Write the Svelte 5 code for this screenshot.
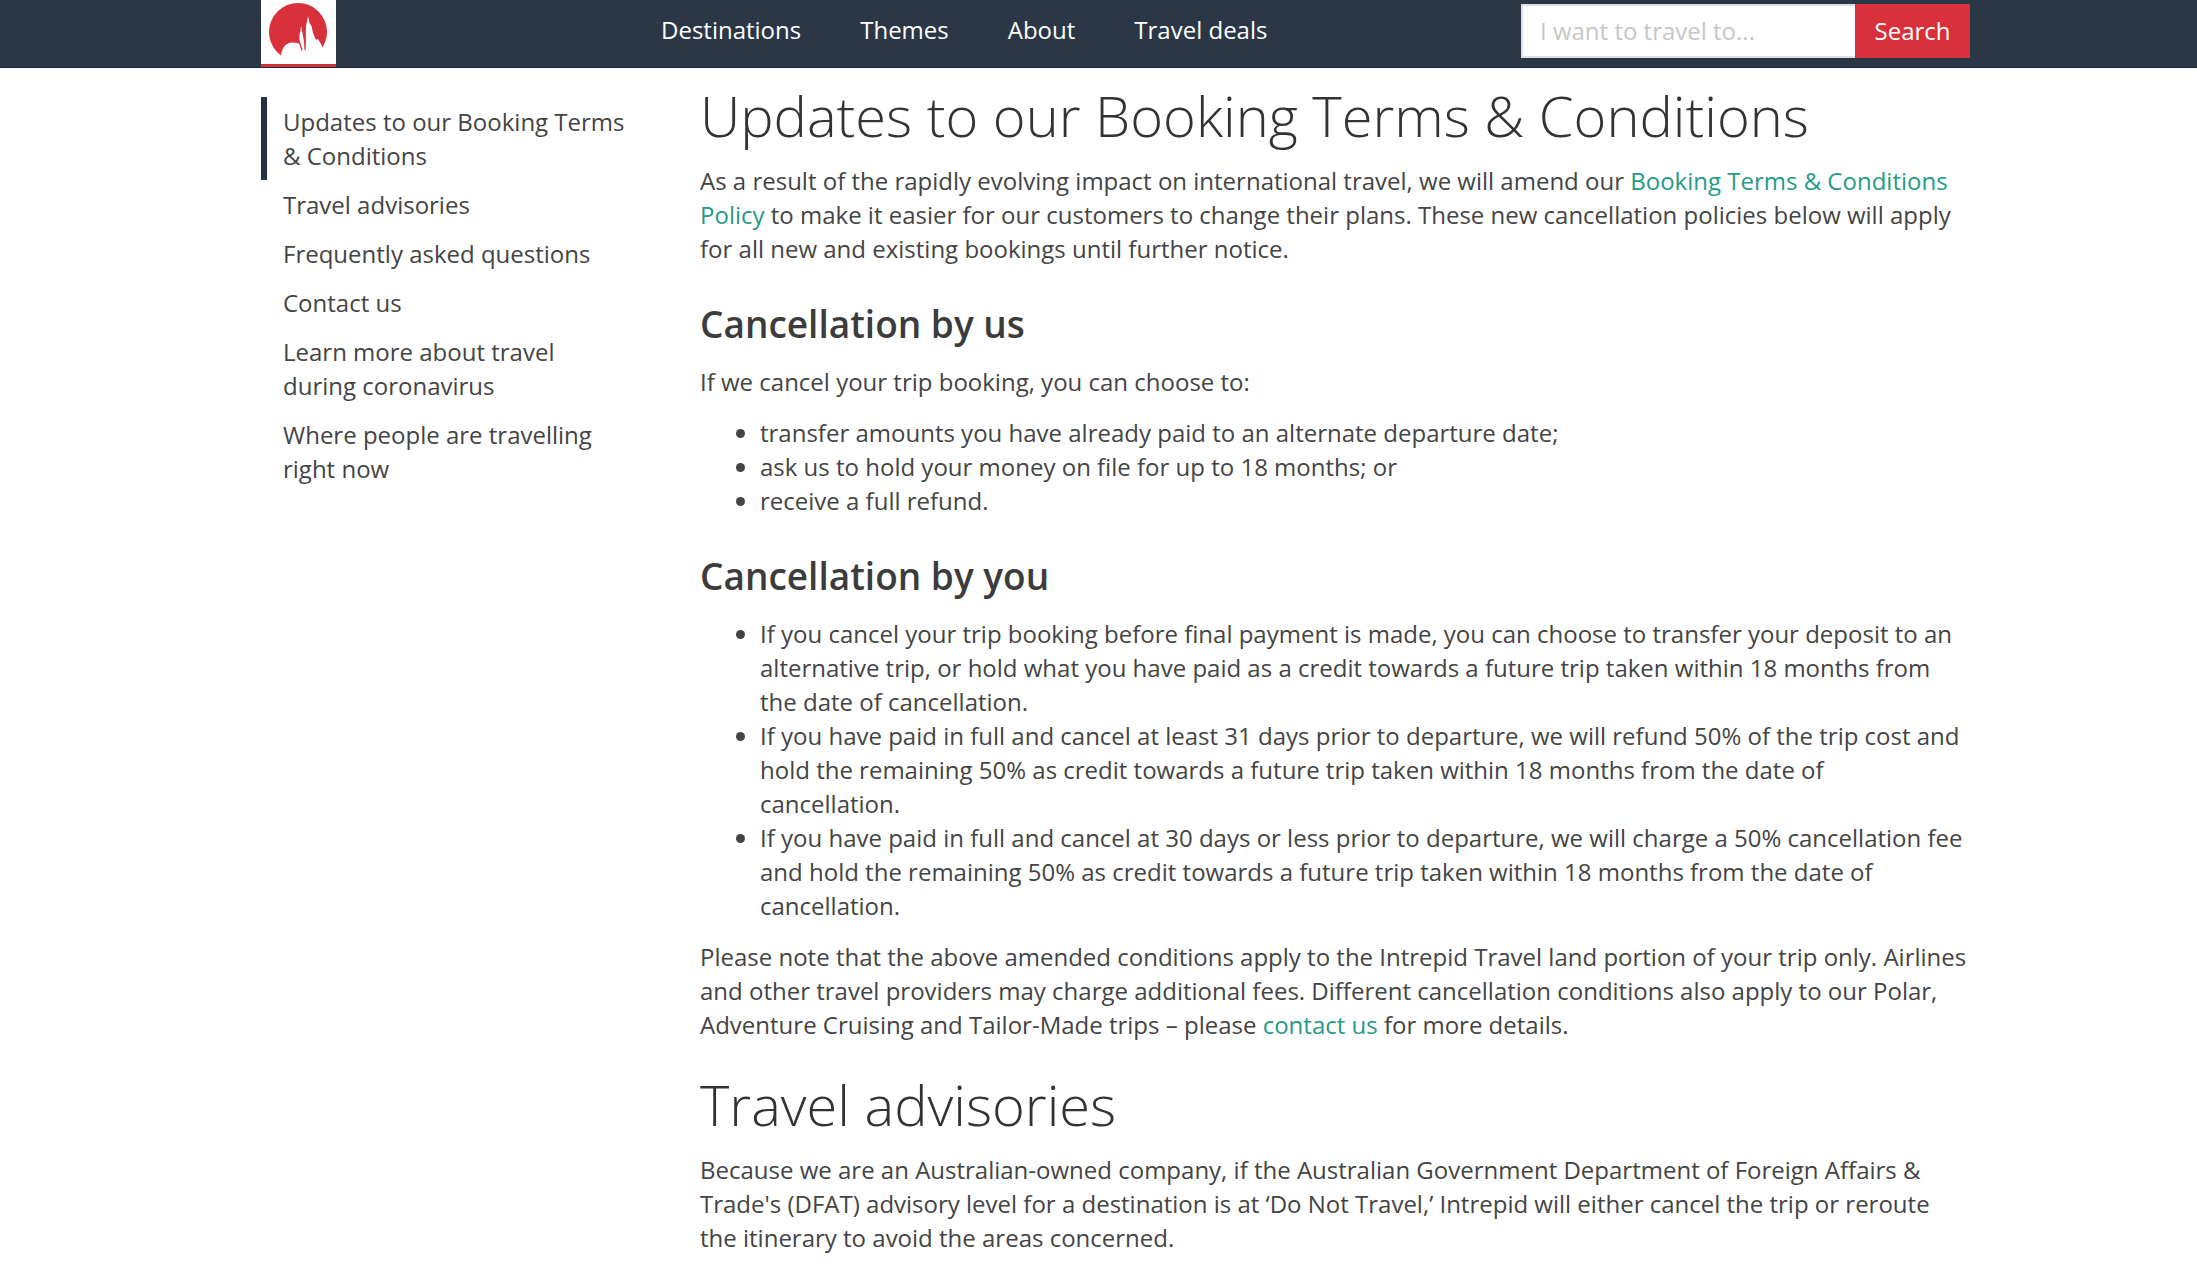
<script>
  const nav = ['Destinations', 'Themes', 'About', 'Travel deals'];
  const sections = [
    'Updates to our Booking Terms & Conditions',
    'Travel advisories',
    'Frequently asked questions',
    'Contact us',
    'Learn more about travel during coronavirus',
    'Where people are travelling right now'
  ];
  let active = $state(0);
  let query = $state('');
</script>

<header>
  <a class="logo" href="#home" aria-label="Home">
    <svg viewBox="0 0 75 64" aria-hidden="true">
      <path
        fill="#d9313b"
        d="M20 55.5 A29 29 0 1 1 61.5 47.5 L60 44 L57 39 L55 40 L52 33 L50.5 26 L48.5 23 L47 16 L46 22 L45 25 L44.7 50 L43.5 50 L42.8 40 L41.5 33 L40 26 L39.5 31 L38.5 34 L38.5 40 L41.5 50 L40.5 51 L38 43.5 Q31 41.5 26 44 Q21 47 20 55.5 Z"
      />
    </svg>
  </a>
  <nav aria-label="Main">
    {#each nav as label}
      <a href="#{label}">{label}</a>
    {/each}
  </nav>
  <form role="search" onsubmit={(e) => e.preventDefault()}>
    <input type="text" aria-label="Destination" placeholder="I want to travel to..." bind:value={query} />
    <button type="submit">Search</button>
  </form>
</header>

<div class="page">
  <aside>
    {#each sections as label, i}
      <a href="#section-{i}" class:active={active === i} onclick={() => (active = i)}>{label}</a>
    {/each}
  </aside>

  <main>
    <h1 id="section-0">Updates to our Booking Terms &amp; Conditions</h1>
    <p>
      As a result of the rapidly evolving impact on international travel, we will amend our
      <a href="#policy">Booking Terms &amp; Conditions Policy</a> to make it easier for our customers to change
      their plans. These new cancellation policies below will apply for all new and existing bookings until
      further notice.
    </p>

    <h2>Cancellation by us</h2>
    <p>If we cancel your trip booking, you can choose to:</p>
    <ul>
      <li>transfer amounts you have already paid to an alternate departure date;</li>
      <li>ask us to hold your money on file for up to 18 months; or</li>
      <li>receive a full refund.</li>
    </ul>

    <h2>Cancellation by you</h2>
    <ul>
      <li>
        If you cancel your trip booking before final payment is made, you can choose to transfer your deposit
        to an alternative trip, or hold what you have paid as a credit towards a future trip taken within 18
        months from the date of cancellation.
      </li>
      <li>
        If you have paid in full and cancel at least 31 days prior to departure, we will refund 50% of the
        trip cost and hold the remaining 50% as credit towards a future trip taken within 18 months from the
        date of cancellation.
      </li>
      <li>
        If you have paid in full and cancel at 30 days or less prior to departure, we will charge a 50%
        cancellation fee and hold the remaining 50% as credit towards a future trip taken within 18 months
        from the date of cancellation.
      </li>
    </ul>
    <p>
      Please note that the above amended conditions apply to the Intrepid Travel land portion of your trip
      only. Airlines and other travel providers may charge additional fees. Different cancellation conditions
      also apply to our Polar, Adventure Cruising and Tailor-Made trips – please
      <a href="#contact">contact us</a> for more details.
    </p>

    <h1 id="section-1">Travel advisories</h1>
    <p>
      Because we are an Australian-owned company, if the Australian Government Department of Foreign Affairs
      &amp; Trade's (DFAT) advisory level for a destination is at ‘Do Not Travel,’ Intrepid will either cancel
      the trip or reroute the itinerary to avoid the areas concerned.
    </p>
  </main>
</div>

<style>
  :global(body) {
    margin: 0;
    background: #fff;
    color: #444;
    font: 24px/34px 'Open Sans', 'Noto Sans', sans-serif;
  }
  header,
  .page {
    display: grid;
    grid-template-columns: 372px 1fr;
    padding: 0 227px 0 261px;
  }
  header {
    grid-template-columns: 400px 1fr auto;
    height: 68px;
    box-sizing: border-box;
    background: #2b3746;
    border-bottom: 1px solid #1f2a36;
  }
  .logo {
    width: 75px;
    height: 64px;
    background: #fff;
    border-bottom: 3px solid #d0313c;
  }
  .logo svg {
    display: block;
  }
  nav {
    display: flex;
    gap: 59px;
    padding-top: 13px;
  }
  nav a {
    color: #fff;
    text-decoration: none;
    white-space: nowrap;
  }
  form {
    display: flex;
    height: 54px;
    margin-top: 4px;
  }
  input,
  button {
    box-sizing: border-box;
    font: inherit;
    border: 0;
    border-radius: 0;
  }
  input {
    width: 334px;
    padding: 0 17px;
    border: 2px solid #dcdfe3;
    border-right-width: 0;
    background: #fff;
    color: #444;
  }
  input::placeholder {
    color: #c6c6c6;
    opacity: 1;
  }
  button {
    width: 115px;
    padding: 0;
    background: #d9313b;
    color: #fff;
    font-weight: 500;
  }
  aside {
    padding-top: 29px;
  }
  aside a {
    display: block;
    padding: 8px 0 7px 16px;
    border-left: 6px solid transparent;
    color: #444;
    text-decoration: none;
  }
  aside .active {
    border-color: #233140;
  }
  main {
    padding: 14px 2px 11px 67px;
  }
  h1 {
    margin: 0 0 16px;
    color: #333;
    font-size: 56px;
    line-height: 66px;
    font-weight: 300;
  }
  h2 {
    margin: 34px 0 17px;
    color: #3c3c3c;
    font-size: 37px;
    line-height: 48px;
    font-weight: 600;
  }
  p,
  ul {
    margin: 0 0 17px;
  }
  ul {
    padding-left: 60px;
  }
  p + h1 {
    margin-top: 29px;
  }
  p:last-child {
    margin-bottom: 0;
  }
  p a {
    color: #239b86;
    text-decoration: none;
  }
</style>
